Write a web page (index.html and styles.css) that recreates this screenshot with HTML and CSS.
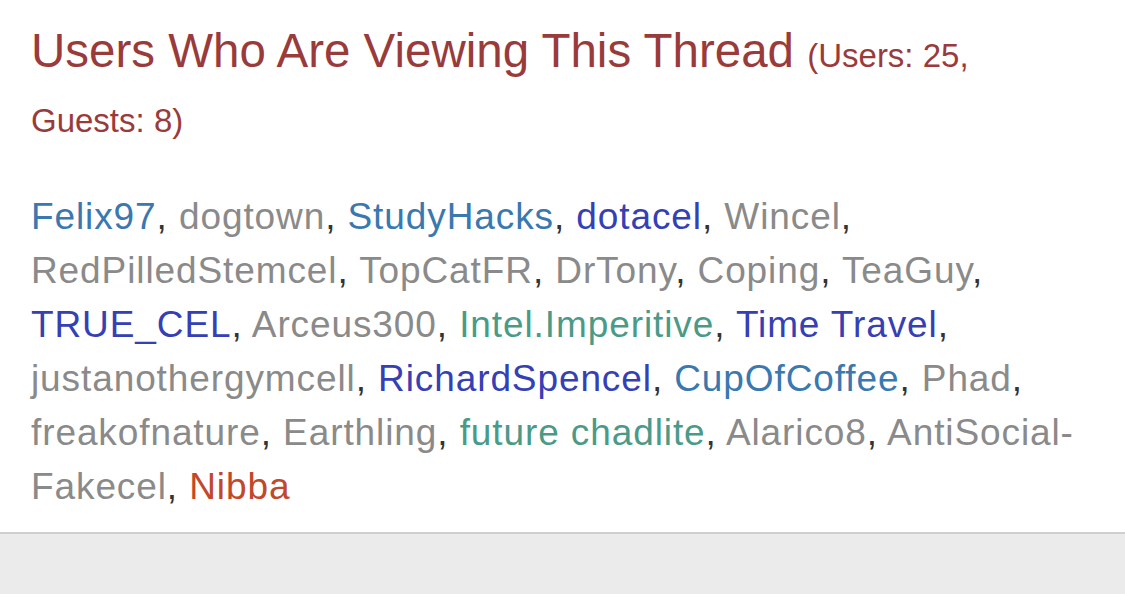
FILE: index.html
```html
<!DOCTYPE html>
<html lang="en">
<head>
  <meta charset="UTF-8" />
  <title>Users Who Are Viewing This Thread</title>
  <link rel="stylesheet" href="styles.css">
</head>
<body>
  <div class="block">
    <h3 class="block-title">Users Who Are Viewing This Thread <span class="counts">(Users: 25, Guests: 8)</span></h3>

    <div class="users">
      <a class="u-blue">Felix97</a>, <a class="u-gray">dogtown</a>, <a class="u-blue">StudyHacks</a>, <a class="u-indigo">dotacel</a>, <a class="u-gray">Wincel</a>,
      <a class="u-gray">RedPilledStemcel</a>, <a class="u-gray">TopCatFR</a>, <a class="u-gray">DrTony</a>, <a class="u-gray">Coping</a>, <a class="u-gray">TeaGuy</a>,
      <a class="u-indigo">TRUE_CEL</a>, <a class="u-gray">Arceus300</a>, <a class="u-teal">Intel.Imperitive</a>, <a class="u-indigo">Time Travel</a>,
      <a class="u-gray">justanothergymcell</a>, <a class="u-indigo">RichardSpencel</a>, <a class="u-blue">CupOfCoffee</a>, <a class="u-gray">Phad</a>,
      <a class="u-gray">freakofnature</a>, <a class="u-gray">Earthling</a>, <a class="u-teal">future chadlite</a>, <a class="u-gray">Alarico8</a>, <a class="u-gray">AntiSocial-Fakecel</a>, <a class="u-red">Nibba</a>
    </div>
  </div>
</body>
</html>
```

FILE: styles.css
```css
body {
  margin: 0;
  background-color: #ebebeb;
  font-family: "Liberation Sans", Arial, sans-serif;
}
.block {
  background-color: #fff;
  padding: 18px 36px 18px 31px;
  border-bottom: 2px solid #cfcfcf;
}
.block-title {
  margin: 0;
  font-size: 47.5px;
  font-weight: normal;
  line-height: 65px;
  color: #9a3b3b;
}
.counts {
  font-size: 33px;
  line-height: 40px;
}
.users {
  margin-top: 42px;
  font-size: 37px;
  letter-spacing: 0.9px;
  line-height: 54px;
  color: #333;
}
.users a {
  text-decoration: none;
}
.u-gray {
  color: #8a8a8a;
}
.u-blue {
  color: #3a78b0;
}
.u-indigo {
  color: #3540b4;
}
.u-teal {
  color: #4a9a88;
}
.u-red {
  color: #c2482a;
}
```
